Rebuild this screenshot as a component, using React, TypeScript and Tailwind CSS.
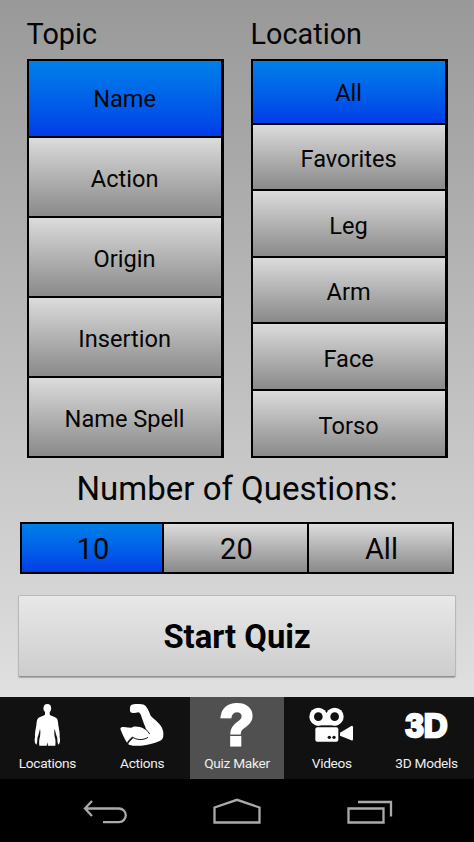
import { useState } from "react"
import type { ReactNode } from "react"
import clsx from "clsx"

const topics = ["Name", "Action", "Origin", "Insertion", "Name Spell"]
const locations = ["All", "Favorites", "Leg", "Arm", "Face", "Torso"]
const counts = ["10", "20", "All"]

interface ChoiceProps {
  options: string[]
  value: string
  onChange: (v: string) => void
  horizontal?: boolean
}

function Choice({ options, value, onChange, horizontal }: ChoiceProps) {
  return (
    <div
      className={clsx(
        "flex border-black",
        horizontal
          ? "mx-5 mt-[13px] h-[52px] border-y-2 text-[29px]"
          : "h-[398.7px] w-[197px] flex-col border-r-3 border-l-2 text-[23.6px]"
      )}
    >
      {options.map(option => (
        <button
          key={option}
          onClick={() => onChange(option)}
          className={clsx(
            "min-h-0 min-w-0 flex-1 border-black bg-linear-to-b leading-none text-[#050505]",
            horizontal
              ? "border-r-2 pt-[4px] pl-[2px] first:flex-[0.977] first:border-l-2"
              : "border-b-2 pt-[6px] first:border-t-2 first:pt-[3px]",
            value === option ? "from-[#047fe8] to-[#003ce8]" : "from-[#dcdcdc] to-[#8a8a8a]"
          )}
        >
          {option}
        </button>
      ))}
    </div>
  )
}

function TorsoIcon() {
  return (
    <svg viewBox="100 36 84 138" className="h-[46px] w-[28px] fill-white">
      <ellipse cx="143" cy="55" rx="11.5" ry="13" />
      <path d="M136 60V72C136 78 122 79 116 84C111 88 111 98 110 106C108 118 105 130 106 142C104 150 104 160 110 164C113 160 113 152 113 145C116 136 119 126 121 116C123 124 122 132 121 140C118 148 118 158 119 167H141L143 157L145 167H167C168 158 168 148 165 140C164 132 163 124 165 116C167 126 170 136 173 145C173 152 173 160 176 164C182 160 182 150 180 142C181 130 178 118 176 106C175 98 175 88 170 84C164 79 150 78 150 72V60Z" />
    </svg>
  )
}

function ArmIcon() {
  return (
    <svg viewBox="358 36 138 138" className="size-[46px]">
      <path
        className="fill-white"
        d="M392 48C396 42 406 42 414 42C426 41 434 43 438 48C446 58 449 68 453 77C462 88 476 95 482 106C488 114 492 124 491 134C491 144 488 149 480 153C462 160 445 166 425 167C412 168 400 168 388 164L383 160C375 148 368 132 362 117C362 112 367 111 373 111C381 112 388 113 395 113C402 108 412 109 420 111C428 113 433 117 440 120C436 108 430 95 426 82C424 75 421 68 416 67C408 69 398 71 392 66C390 60 391 54 392 48Z"
      />
      <g className="fill-none stroke-[#111]">
        <path strokeWidth="5" d="M381 165C385 156 391 149 399 142" />
        <path strokeWidth="3" d="M398 141C410 150 430 152 445 142" />
        <path strokeWidth="3" d="M438 118C443 122 447 126 450 132" />
      </g>
    </svg>
  )
}

function CameraIcon() {
  return (
    <svg viewBox="382 36 138 138" className="mr-[2px] size-[46px] fill-white">
      <rect x="405" y="70" width="65" height="36" />
      <circle cx="413" cy="80" r="27" />
      <circle cx="462" cy="80" r="27" />
      <circle cx="413" cy="80" r="13" fill="#111" />
      <circle cx="462" cy="80" r="13" fill="#111" />
      <rect x="404" y="112" width="69" height="43" rx="6" />
      <path d="M478 128l34-20q5-2 5 4v35q0 6-5 4l-34-14z" />
      <circle cx="446" cy="142" r="5" fill="#111" />
      <circle cx="460" cy="142" r="5" fill="#111" />
    </svg>
  )
}

interface TabProps {
  label: string
  active?: boolean
  children: ReactNode
}

function Tab({ label, active, children }: TabProps) {
  return (
    <button className={clsx("flex min-w-0 flex-1 flex-col items-center pt-[5px]", active && "bg-[#505050]")}>
      <span className="flex h-[46px] items-center justify-center text-white">{children}</span>
      <span className="mt-[6px] text-[13.7px] leading-[18px] tracking-[-0.3px] whitespace-nowrap text-[#eee]">{label}</span>
    </button>
  )
}

export default function App() {
  const [topic, setTopic] = useState("Name")
  const [location, setLocation] = useState("All")
  const [count, setCount] = useState("10")

  return (
    <div className="flex h-[842px] w-[474px] flex-col overflow-hidden bg-black font-[Roboto,sans-serif]">
      <main className="flex h-[697px] flex-col bg-linear-to-b from-[#999] to-[#e0e0e0] text-[#050505]">
        <div className="flex gap-[27px] pt-[17px] pl-[26.6px]">
          <section>
            <h2 className="mb-[8px] text-[28.8px] leading-[34px]">Topic</h2>
            <Choice options={topics} value={topic} onChange={setTopic} />
          </section>
          <section>
            <h2 className="mb-[8px] text-[28.8px] leading-[34px]">Location</h2>
            <Choice options={locations} value={location} onChange={setLocation} />
          </section>
        </div>

        <h2 className="mt-[11px] text-center text-[33px] leading-[40px]">Number of Questions:</h2>
        <Choice options={counts} value={count} onChange={setCount} horizontal />

        <button className="mx-[18px] mt-[21px] h-[82px] rounded-[2px] border border-[#b8b8b8] border-b-[#909090] bg-linear-to-b from-[#e8e8e8] to-[#cdcdcd] pt-[4px] text-[32.8px] font-bold text-black shadow-[0_1px_1px_#aaa]">
          Start Quiz
        </button>
      </main>

      <nav className="flex h-[82px] bg-[#111]">
        <Tab label="Locations">
          <TorsoIcon />
        </Tab>
        <Tab label="Actions">
          <ArmIcon />
        </Tab>
        <Tab label="Quiz Maker" active>
          <span className="font-['Liberation_Sans',sans-serif] text-[57px] leading-[46px] font-bold [-webkit-text-stroke:3px_white]">
            ?
          </span>
        </Tab>
        <Tab label="Videos">
          <CameraIcon />
        </Tab>
        <Tab label="3D Models">
          <span className="font-['Liberation_Sans',sans-serif] text-[33px] leading-none font-bold [-webkit-text-stroke:2.5px_white]">
            3D
          </span>
        </Tab>
      </nav>

      <div className="flex h-[63px] items-start justify-between pt-[19px] pr-[81px] pl-[83px]">
        <svg viewBox="0 0 45 27" className="h-[27px] w-[45px] fill-none stroke-[#aaa] stroke-[2.3]">
          <path d="M9 3L2 10.5L9 18M2 10.5H36a6.8 6.8 0 0 1 0 13.6H20" />
        </svg>
        <svg viewBox="0 0 49 27" className="h-[27px] w-[49px] fill-none stroke-[#aaa] stroke-[2.3]">
          <path d="M1.5 9.5L24 1.8L46.5 9.5V24.5H1.5z" />
        </svg>
        <svg viewBox="0 0 46 27" className="h-[27px] w-[46px] fill-none stroke-[#aaa] stroke-[2.3]">
          <path d="M1.5 10.5H36.5V24.5H1.5zM11 4H44V18.5" />
        </svg>
      </div>
    </div>
  )
}
